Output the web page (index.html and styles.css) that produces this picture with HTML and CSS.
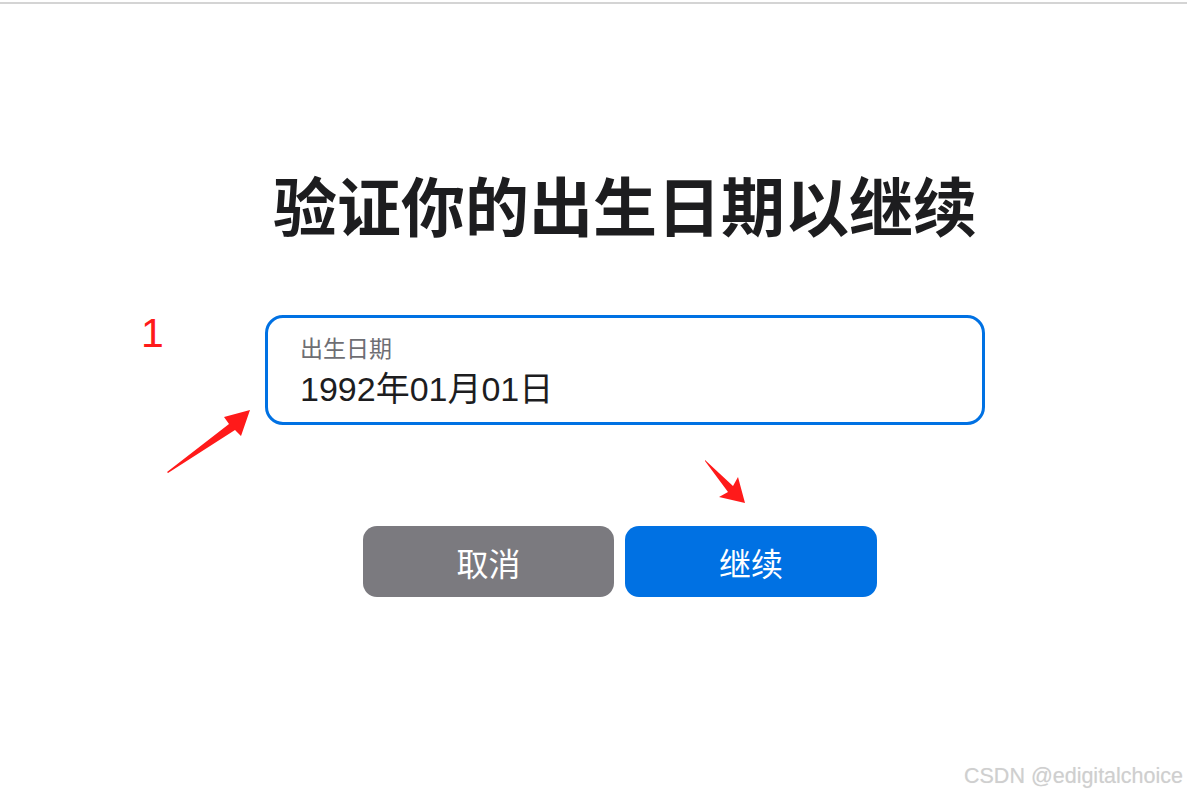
FILE: index.html
```html
<!DOCTYPE html>
<html lang="zh-CN">
<head>
<meta charset="utf-8">
<title>验证你的出生日期以继续</title>
<link rel="stylesheet" href="styles.css">
</head>
<body>
<div class="topline"></div>
<main class="page">
  <h1 class="title">验证你的出生日期以继续</h1>
  <div class="field">
    <div class="field-label">出生日期</div>
    <div class="field-value">1992年01月01日</div>
  </div>
  <div class="actions">
    <button class="btn btn-cancel">取消</button>
    <button class="btn btn-continue">继续</button>
  </div>
</main>

<div class="mark-num">1</div>
<svg class="arrow arrow-a" width="100" height="80" viewBox="0 0 100 80">
  <polygon points="1,64 63,16 58,9 84,2 75,28 69,22 2,65" fill="#ff1a1a"/>
</svg>
<svg class="arrow arrow-b" width="60" height="60" viewBox="0 0 60 60">
  <polygon points="0,0 28,26 33,17 40,43 14,37 23,32 0,1" fill="#ff1a1a"/>
</svg>
<div class="watermark">CSDN @edigitalchoice</div>
</body>
</html>
```

FILE: styles.css
```css
html, body {
  margin: 0;
  padding: 0;
  background: #ffffff;
}
body {
  font-family: "Liberation Sans", "Noto Sans CJK SC", sans-serif;
  color: #1d1d1f;
  position: relative;
  min-height: 797px;
}
.topline {
  margin-top: 2px;
  height: 2px;
  background: #d4d4d4;
}
.page {
  width: 720px;
  margin-left: 265px;
  display: flex;
  flex-direction: column;
}
.title {
  margin: 162px -60px 0 -60px;
  font-family: "Noto Sans CJK SC", sans-serif;
  font-weight: 700;
  font-size: 64px;
  line-height: 74px;
  letter-spacing: 0;
  white-space: nowrap;
  text-align: center;
  color: #1d1d1f;
}
.field {
  margin-top: 75px;
  height: 104px;
  border: 3px solid #0071e3;
  border-radius: 18px;
  padding: 0 32px;
  display: flex;
  flex-direction: column;
}
.field-label {
  margin-top: 15px;
  font-family: "Noto Sans CJK SC", sans-serif;
  font-size: 23px;
  line-height: 28px;
  color: #6e6e73;
}
.field-value {
  margin-top: 8px;
  font-family: "Liberation Sans", "Noto Sans CJK SC", sans-serif;
  font-size: 34px;
  line-height: 40px;
  color: #1d1d1f;
}
.actions {
  margin-top: 101px;
  margin-left: 98px;
  display: flex;
  gap: 11px;
}
.btn {
  width: 251px;
  height: 71px;
  border: none;
  border-radius: 14px;
  color: #ffffff;
  font-family: "Noto Sans CJK SC", sans-serif;
  font-size: 32px;
  font-weight: 400;
  padding: 0;
}
.btn-cancel {
  background: #7b7a7f;
}
.btn-continue {
  background: #0071e3;
  width: 252px;
}
.mark-num {
  position: absolute;
  left: 141px;
  top: 310px;
  font-family: "Liberation Sans", sans-serif;
  font-size: 41px;
  line-height: 46px;
  color: #ff1a1a;
}
.arrow {
  position: absolute;
}
.arrow-a {
  left: 166px;
  top: 408px;
}
.arrow-b {
  left: 705px;
  top: 460px;
}
.watermark {
  position: absolute;
  right: 4px;
  top: 762px;
  font-family: "Liberation Sans", sans-serif;
  font-size: 21.5px;
  line-height: 28px;
  color: #cfcfcf;
  text-shadow: 0 0 1px #e8e8e8;
}
```
